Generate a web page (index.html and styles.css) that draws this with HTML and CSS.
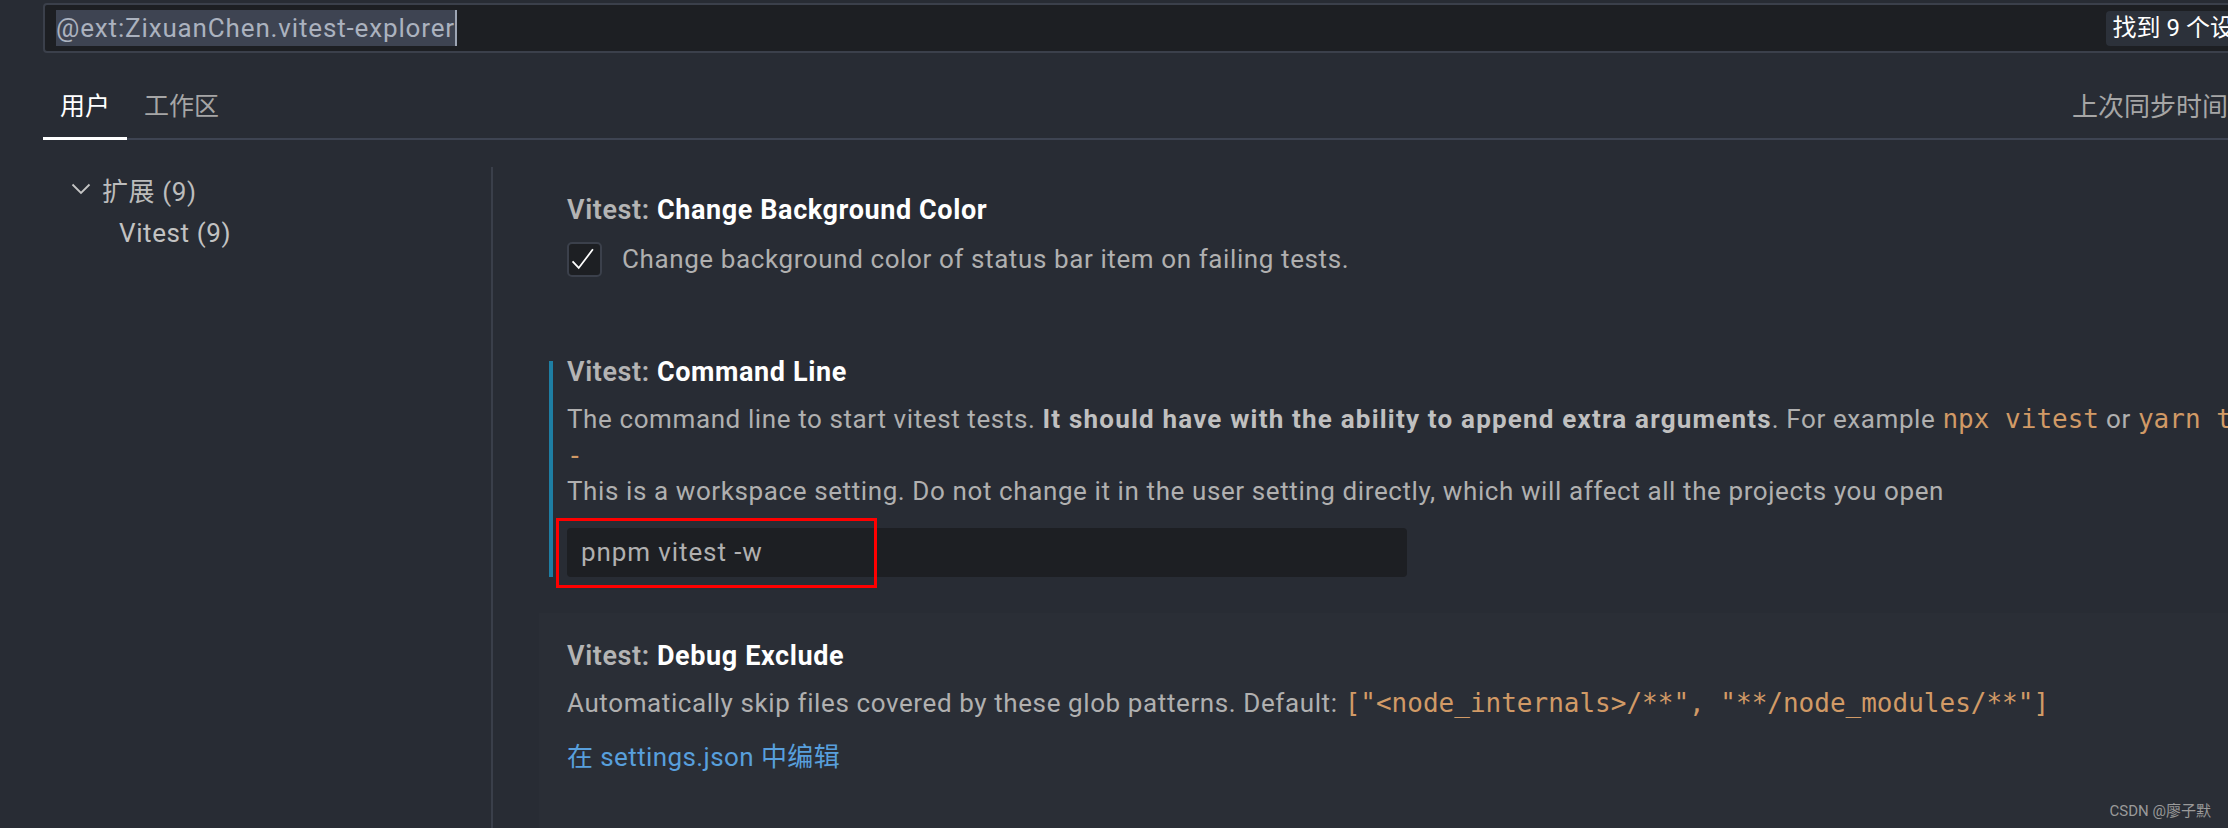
FILE: index.html
```html
<!DOCTYPE html>
<html lang="zh-CN">
<head>
<meta charset="utf-8">
<title>设置</title>
<link rel="stylesheet" href="styles.css">
</head>
<body>
<div class="editor">
  <div class="search">
    <div class="query"><span class="sel">@ext:ZixuanChen.vitest-explorer</span><span class="caret"></span></div>
    <div class="count">找到 9 个设置</div>
  </div>
  <div class="tabs-row">
    <div class="tab active">用户</div>
    <div class="tab">工作区</div>
    <div class="sync">上次同步时间：刚刚</div>
  </div>
  <div class="body">
    <nav class="toc">
      <div class="toc-row group">
        <svg class="chev" viewBox="0 0 20 12" width="20" height="12"><path d="M1.5 1.5 L10 10 L18.5 1.5" fill="none" stroke="#c5c5c5" stroke-width="1.8"/></svg>
        <span>扩展 (9)</span>
      </div>
      <div class="toc-row child">Vitest (9)</div>
    </nav>
    <div class="divider"></div>
    <div class="list">
      <div class="item">
        <div class="title"><span class="cat">Vitest: </span><span class="name">Change Background Color</span></div>
        <div class="bool-row">
          <span class="checkbox"><svg viewBox="0 0 35 35" width="31" height="31"><path d="M4 19.5 L11 27 L27 6" fill="none" stroke="#ffffff" stroke-width="2"/></svg></span>
          <span class="desc">Change background color of status bar item on failing tests.</span>
        </div>
      </div>
      <div class="item modified">
        <div class="indicator"></div>
        <div class="title"><span class="cat">Vitest: </span><span class="name">Command Line</span></div>
        <div class="desc block">The command line to start vitest tests. <b>It should have with the ability to append extra arguments</b>. For example <code>npx vitest</code> or <code>yarn test -</code><br><code>-</code><br>This is a workspace setting. Do not change it in the user setting directly, which will affect all the projects you open</div>
        <div class="input-wrap">
          <div class="input">pnpm vitest -w</div>
          <div class="mark"></div>
        </div>
      </div>
      <div class="item hover">
        <div class="title"><span class="cat">Vitest: </span><span class="name">Debug Exclude</span></div>
        <div class="desc block">Automatically skip files covered by these glob patterns. Default: <code>["&lt;node_internals&gt;/**", "**/node_modules/**"]</code></div>
        <div class="link">在 settings.json 中编辑</div>
      </div>
    </div>
  </div>
</div>
<div class="watermark">CSDN @廖子默</div>
</body>
</html>
```

FILE: styles.css
```css
html, body {
  margin: 0;
  padding: 0;
}

body {
  position: relative;
  width: 2228px;
  height: 828px;
  overflow: hidden;
  background: #282c34;
  font-family: Roboto, "Noto Sans CJK SC", sans-serif;
  color: #b0b0b0;
}

.editor {
  display: flex;
  flex-direction: column;
  width: 2350px;
  height: 828px;
  padding: 3px 0 0 43px;
  box-sizing: border-box;
}

/* search */
.search {
  display: flex;
  align-items: center;
  height: 50px;
  flex: none;
  box-sizing: border-box;
  border: 2px solid #3b404b;
  border-radius: 4px;
  background: #1d1f23;
  padding: 0 6px 0 11px;
  margin-right: 77px;
}

.query {
  flex: 1;
  display: flex;
  align-items: center;
  font-size: 26px;
  line-height: 36px;
  letter-spacing: 0.85px;
  color: #abb2bf;
}

.sel {
  background: #3e4452;
}

.caret {
  width: 2px;
  height: 36px;
  background: #9da5b4;
}

.count {
  font-size: 24px;
  line-height: 35px;
  padding: 0 7px;
  background: #2c313a;
  color: #ffffff;
  border-radius: 4px;
  white-space: nowrap;
}

/* tabs */
.tabs-row {
  display: flex;
  align-items: flex-end;
  flex: none;
  height: 85px;
  border-bottom: 2px solid #3e4452;
}

.tab {
  font-size: 25px;
  line-height: 36px;
  padding: 0 17px 12px;
  margin-bottom: -2px;
  border-bottom: 3px solid transparent;
  color: #a6a6a6;
}

.tab.active {
  color: #ffffff;
  border-bottom-color: #ffffff;
}

.sync {
  margin-left: auto;
  margin-right: 44px;
  font-size: 26px;
  line-height: 36px;
  padding-bottom: 13px;
  color: #a6a6a6;
  white-space: nowrap;
}

/* body */
.body {
  flex: 1;
  display: flex;
  padding-top: 27px;
}

.toc {
  width: 448px;
  flex: none;
  font-size: 26px;
  letter-spacing: 0.6px;
}

.toc-row {
  display: flex;
  align-items: center;
  height: 44px;
  white-space: nowrap;
}

.toc-row.group {
  padding-left: 28px;
  color: #bcbcbc;
}

.chev {
  margin-right: 11px;
}

.toc-row.child {
  padding-left: 76px;
  color: #c2c2c2;
}

.divider {
  width: 2px;
  flex: none;
  background: #3a3f4a;
}

.list {
  flex: 1;
  padding-left: 46px;
}

/* setting items */
.item {
  position: relative;
  padding: 25px 28px 36px;
}

.item.hover {
  background: #2a2e36;
  height: 100%;
  box-sizing: border-box;
}

.indicator {
  position: absolute;
  left: 10px;
  top: 32px;
  bottom: 36px;
  width: 4px;
  background: #1e7ea3;
}

.title {
  font-size: 27px;
  line-height: 36px;
  font-weight: 700;
  letter-spacing: 0.6px;
  white-space: nowrap;
}

.cat {
  color: #b4b4b4;
  font-weight: 600;
}

.name {
  color: #ffffff;
}

.bool-row {
  display: flex;
  align-items: center;
  margin-top: 13px;
  margin-bottom: 16px;
}

.checkbox {
  display: flex;
  align-items: center;
  justify-content: center;
  width: 35px;
  height: 35px;
  flex: none;
  box-sizing: border-box;
  border: 2px solid #3b404b;
  border-radius: 5px;
  background: #1d1f23;
  margin-right: 20px;
}

.desc {
  font-size: 26px;
  line-height: 36px;
  letter-spacing: 0.6px;
  white-space: nowrap;
  color: #b0b0b0;
}

.desc b {
  color: #c0c0c0;
  letter-spacing: 1.2px;
}

.desc.block {
  margin-top: 11px;
}

code {
  font-family: "DejaVu Sans Mono", monospace;
  font-size: 26px;
  line-height: 1;
  letter-spacing: 0;
  color: #d19a66;
}

.input-wrap {
  position: relative;
  margin-top: 19px;
  width: 840px;
}

.input {
  height: 49px;
  background: #1d1f23;
  border-radius: 4px;
  font-size: 26px;
  line-height: 49px;
  letter-spacing: 0.9px;
  padding-left: 14px;
  color: #b0b0b0;
}

.mark {
  position: absolute;
  left: -11px;
  top: -10px;
  width: 321px;
  height: 70px;
  box-sizing: border-box;
  border: 3px solid #ff0000;
}

.link {
  margin-top: 18px;
  font-size: 26px;
  line-height: 36px;
  letter-spacing: 0.4px;
  color: #589fdc;
}

.watermark {
  position: absolute;
  right: 17px;
  bottom: 8px;
  font-size: 15px;
  color: #9a9a9a;
  white-space: nowrap;
}
```
